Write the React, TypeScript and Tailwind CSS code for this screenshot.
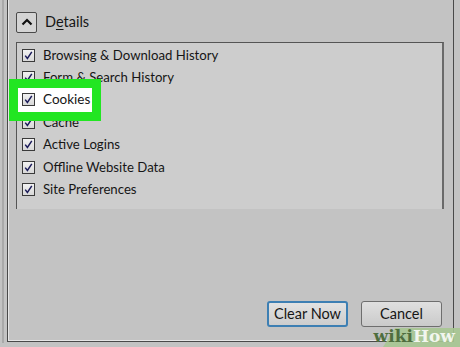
import React from "react";

const font = { fontFamily: 'Lato, "Open Sans", sans-serif' };

function Check() {
  return (
    <div className="w-[13px] h-[13px] shrink-0 border border-[#3a3a3a] bg-gradient-to-b from-[#f2f2f2] to-[#d8d8d8] flex items-center justify-center">
      <svg width="11" height="11" viewBox="0 0 11 11">
        <path d="M2.2 5.6 L4.4 8.4 L8.8 1.8" fill="none" stroke="#1c1c5a" strokeWidth="1.5" />
      </svg>
    </div>
  );
}

function Row({ label }: { label: string }) {
  return (
    <div className="h-[22.4px] flex items-center gap-[8px] pl-[5px]">
      <Check />
      <span className="text-[13.2px] text-[#161616] leading-none">{label}</span>
    </div>
  );
}

export default function App() {
  const items = ["Browsing & Download History", "Form & Search History"];
  const items2 = ["Cache", "Active Logins", "Offline Website Data", "Site Preferences"];
  return (
    <div className="w-[460px] h-[347px] bg-[#c3c3c3] relative overflow-hidden flex" style={font}>
      <div className="w-[2px] h-[343px] bg-[#a9a9a9] ml-[2px] mr-[3px]" />
      <div className="w-[447px] h-[342px] border-l border-r border-b border-[#4a4a4a] shadow-[inset_1px_-1px_0_#e6e6e6] pl-[8px] pt-[12px] flex flex-col">
        <div className="flex items-center h-[20px]">
          <div className="w-[21px] h-[21px] border border-[#4a4a4a] rounded-[2px] bg-[#d4d4d4] flex items-center justify-center">
            <svg width="12" height="8" viewBox="0 0 12 8">
              <path d="M1.5 6.5 L6 2 L10.5 6.5" fill="none" stroke="#111" strokeWidth="2.2" />
            </svg>
          </div>
          <span className="ml-[8px] text-[14.5px] text-[#161616]">
            D<span className="underline underline-offset-2">e</span>tails
          </span>
        </div>
        <div className="mt-[10px] w-[428px] h-[167px] border-t border-l border-[#555] border-r-2 border-r-[#6a6a6a] bg-[#cdcdcd] pt-[1px] flex flex-col">
          {items.map((l) => (
            <Row key={l} label={l} />
          ))}
          <div className="h-[22.4px] relative">
            <div className="absolute left-[-8px] top-[-10px] w-[92px] h-[42px] bg-[#22e622] z-10 pl-[9px] pt-[9px]">
              <div className="w-[74px] h-[24px] bg-white flex items-center gap-[8px] pl-[4px]">
                <Check />
                <span className="text-[13.5px] text-[#161616] leading-none">Cookies</span>
              </div>
            </div>
          </div>
          {items2.map((l) => (
            <Row key={l} label={l} />
          ))}
        </div>
        <div className="flex-1" />
        <div className="flex justify-end gap-[13px] pr-[11px] pb-[14px]">
          <button className="w-[81px] h-[26px] rounded-[3px] border-2 border-[#3d7fb3] bg-gradient-to-b from-[#e2e2e2] to-[#cdcdcd] text-[14.5px] text-[#161616]">
            Clear Now
          </button>
          <button className="w-[81px] h-[26px] rounded-[3px] border border-[#6e6e6e] bg-gradient-to-b from-[#e0e0e0] to-[#cacaca] text-[14.5px] text-[#161616]">
            Cancel
          </button>
        </div>
      </div>
      <div className="absolute right-0 bottom-0 w-[77px] h-[19px] bg-[#a7c792] [clip-path:polygon(12px_0,100%_0,100%_100%,0_100%)] opacity-90" />
      <div className="absolute right-[5px] bottom-[2px] text-[17px] font-bold leading-none" style={{ fontFamily: '"DejaVu Serif", serif' }}>
        <span className="text-[#4f6e3f]">wiki</span>
        <span className="text-[#f2f6ee]">How</span>
      </div>
    </div>
  );
}
